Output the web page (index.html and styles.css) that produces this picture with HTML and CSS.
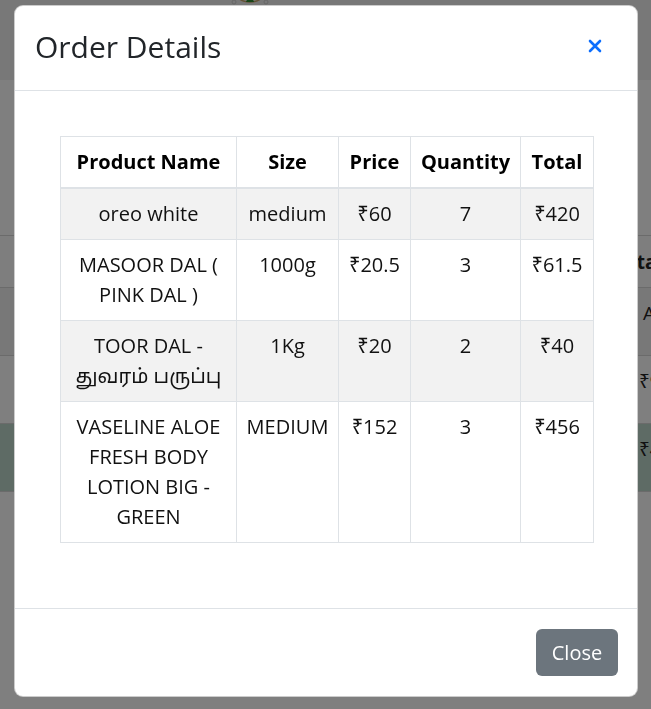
FILE: index.html
```html
<!DOCTYPE html>
<html lang="en">
<head>
<meta charset="utf-8">
<title>Order Details</title>
<link rel="stylesheet" href="styles.css">
</head>
<body>
<div class="page">
  <header class="navbar">
    <svg class="logo" width="40" height="14" viewBox="0 0 40 14">
      <path d="M6 0 C8 5 12 8 20 8 C28 8 32 5 34 0" fill="none" stroke="#c9a66b" stroke-width="1.5"/>
      <circle cx="4" cy="8" r="2" fill="none" stroke="#ccc" stroke-width="1"/>
      <circle cx="36" cy="8" r="2" fill="none" stroke="#ccc" stroke-width="1"/>
      <path d="M20 -2 L24 8 L16 8 Z" fill="#2f8a2f"/>
    </svg>
  </header>
  <div class="bg-content">
    <div class="bg-row bg-head"><span class="bg-cell bold">Total</span></div>
    <div class="bg-row bg-alt r2"><span class="bg-cell">Active</span></div>
    <div class="bg-row r3"><span class="bg-cell">₹900</span></div>
    <div class="bg-row bg-green r3"><span class="bg-cell">₹400</span></div>
    <div class="bg-row"></div>
  </div>
</div>

<div class="overlay">
  <div class="modal">
    <div class="modal-header">
      <h2 class="modal-title">Order Details</h2>
      <button class="x-btn" aria-label="Close">
        <svg width="14" height="14" viewBox="0 0 14 14"><path d="M2 2 L12 12 M12 2 L2 12" stroke="#0d6efd" stroke-width="2.6" stroke-linecap="round"/></svg>
      </button>
    </div>
    <div class="modal-body">
      <table class="items">
        <colgroup>
          <col class="c1"><col class="c2"><col class="c3"><col class="c4"><col class="c5">
        </colgroup>
        <thead>
          <tr><th>Product Name</th><th>Size</th><th>Price</th><th>Quantity</th><th>Total</th></tr>
        </thead>
        <tbody>
          <tr class="striped"><td>oreo white</td><td>medium</td><td>₹60</td><td>7</td><td>₹420</td></tr>
          <tr><td>MASOOR DAL ( PINK DAL )</td><td>1000g</td><td>₹20.5</td><td>3</td><td>₹61.5</td></tr>
          <tr class="striped"><td>TOOR DAL - துவரம் பருப்பு</td><td>1Kg</td><td>₹20</td><td>2</td><td>₹40</td></tr>
          <tr><td>VASELINE ALOE FRESH BODY LOTION BIG - GREEN</td><td>MEDIUM</td><td>₹152</td><td>3</td><td>₹456</td></tr>
        </tbody>
      </table>
    </div>
    <div class="modal-footer">
      <button class="btn-close">Close</button>
    </div>
  </div>
</div>
</body>
</html>
```

FILE: styles.css
```css
* { box-sizing: border-box; }
html, body { margin: 0; padding: 0; }
body {
  font-family: "Open Sans", "Noto Sans", "Noto Sans Tamil", sans-serif;
  background: #fff;
  color: #212529;
  width: 651px;
  height: 709px;
  overflow: hidden;
}
.page { width: 651px; }
.navbar {
  height: 80px;
  background: #f1f1f1;
  display: flex;
  justify-content: flex-start;
  padding-left: 230px;
}
.logo { display: block; margin-top: -6px; }
.bg-content {
  padding-top: 155px;
}
.bg-row {
  height: 68px;
  border-top: 1px solid #d6d6d6;
  display: flex;
  align-items: flex-start;
  padding-top: 10px;
  padding-left: 639px;
  font-size: 19px;
  line-height: 30px;
  color: #222;
  overflow: hidden;
  white-space: nowrap;
}
.bg-head { height: 52px; background: #fdfdfd; padding-top: 11px; padding-left: 614px; }
.bg-alt { background: #f0f0f0; }
.r2 { padding-left: 643px; }
.bg-green { background: #bdd6ca; }
.bold { font-weight: 700; }

.overlay {
  position: fixed;
  inset: 0;
  background: rgba(0, 0, 0, 0.5);
  padding: 5px 13px 0 14px;
}
.modal {
  background: #fff;
  border: 1px solid rgba(0, 0, 0, 0.2);
  border-radius: 9px;
  height: 692px;
  display: flex;
  flex-direction: column;
  overflow: hidden;
}
.modal-header {
  height: 85px;
  border-bottom: 1px solid #dee2e6;
  display: flex;
  align-items: center;
  justify-content: space-between;
  padding: 0 35px 0 20px;
}
.modal-title {
  margin: 0;
  font-size: 30px;
  font-weight: 400;
  color: #212529;
  line-height: 1.2;
  padding-bottom: 2px;
}
.x-btn {
  background: none;
  border: 0;
  padding: 0;
  width: 14px;
  height: 14px;
  display: flex;
  margin-bottom: 4px;
}
.modal-body {
  flex: 1;
  padding: 45px 44px 0 45px;
}
.items {
  width: 533px;
  border-collapse: collapse;
  font-size: 20px;
  color: #111;
  text-align: center;
  table-layout: fixed;
}
.c1 { width: 176px; }
.c2 { width: 102px; }
.c3 { width: 72px; }
.c4 { width: 110px; }
.c5 { width: 73px; }
.items th, .items td {
  border: 1px solid #dee2e6;
  padding: 10px 6px;
  line-height: 30px;
  vertical-align: top;
}
.items th { font-weight: 700; color: #000; }
.items thead tr { border-bottom: 2px solid #dee2e6; }
.items tr.striped td { background: #f2f2f2; }
.modal-footer {
  height: 88px;
  border-top: 1px solid #dee2e6;
  display: flex;
  justify-content: flex-end;
  align-items: center;
  padding: 0 19px 0 0;
}
.btn-close {
  font-family: inherit;
  width: 82px;
  height: 47px;
  background: #6c757d;
  color: #fff;
  border: 0;
  border-radius: 6px;
  font-size: 20px;
}
```
